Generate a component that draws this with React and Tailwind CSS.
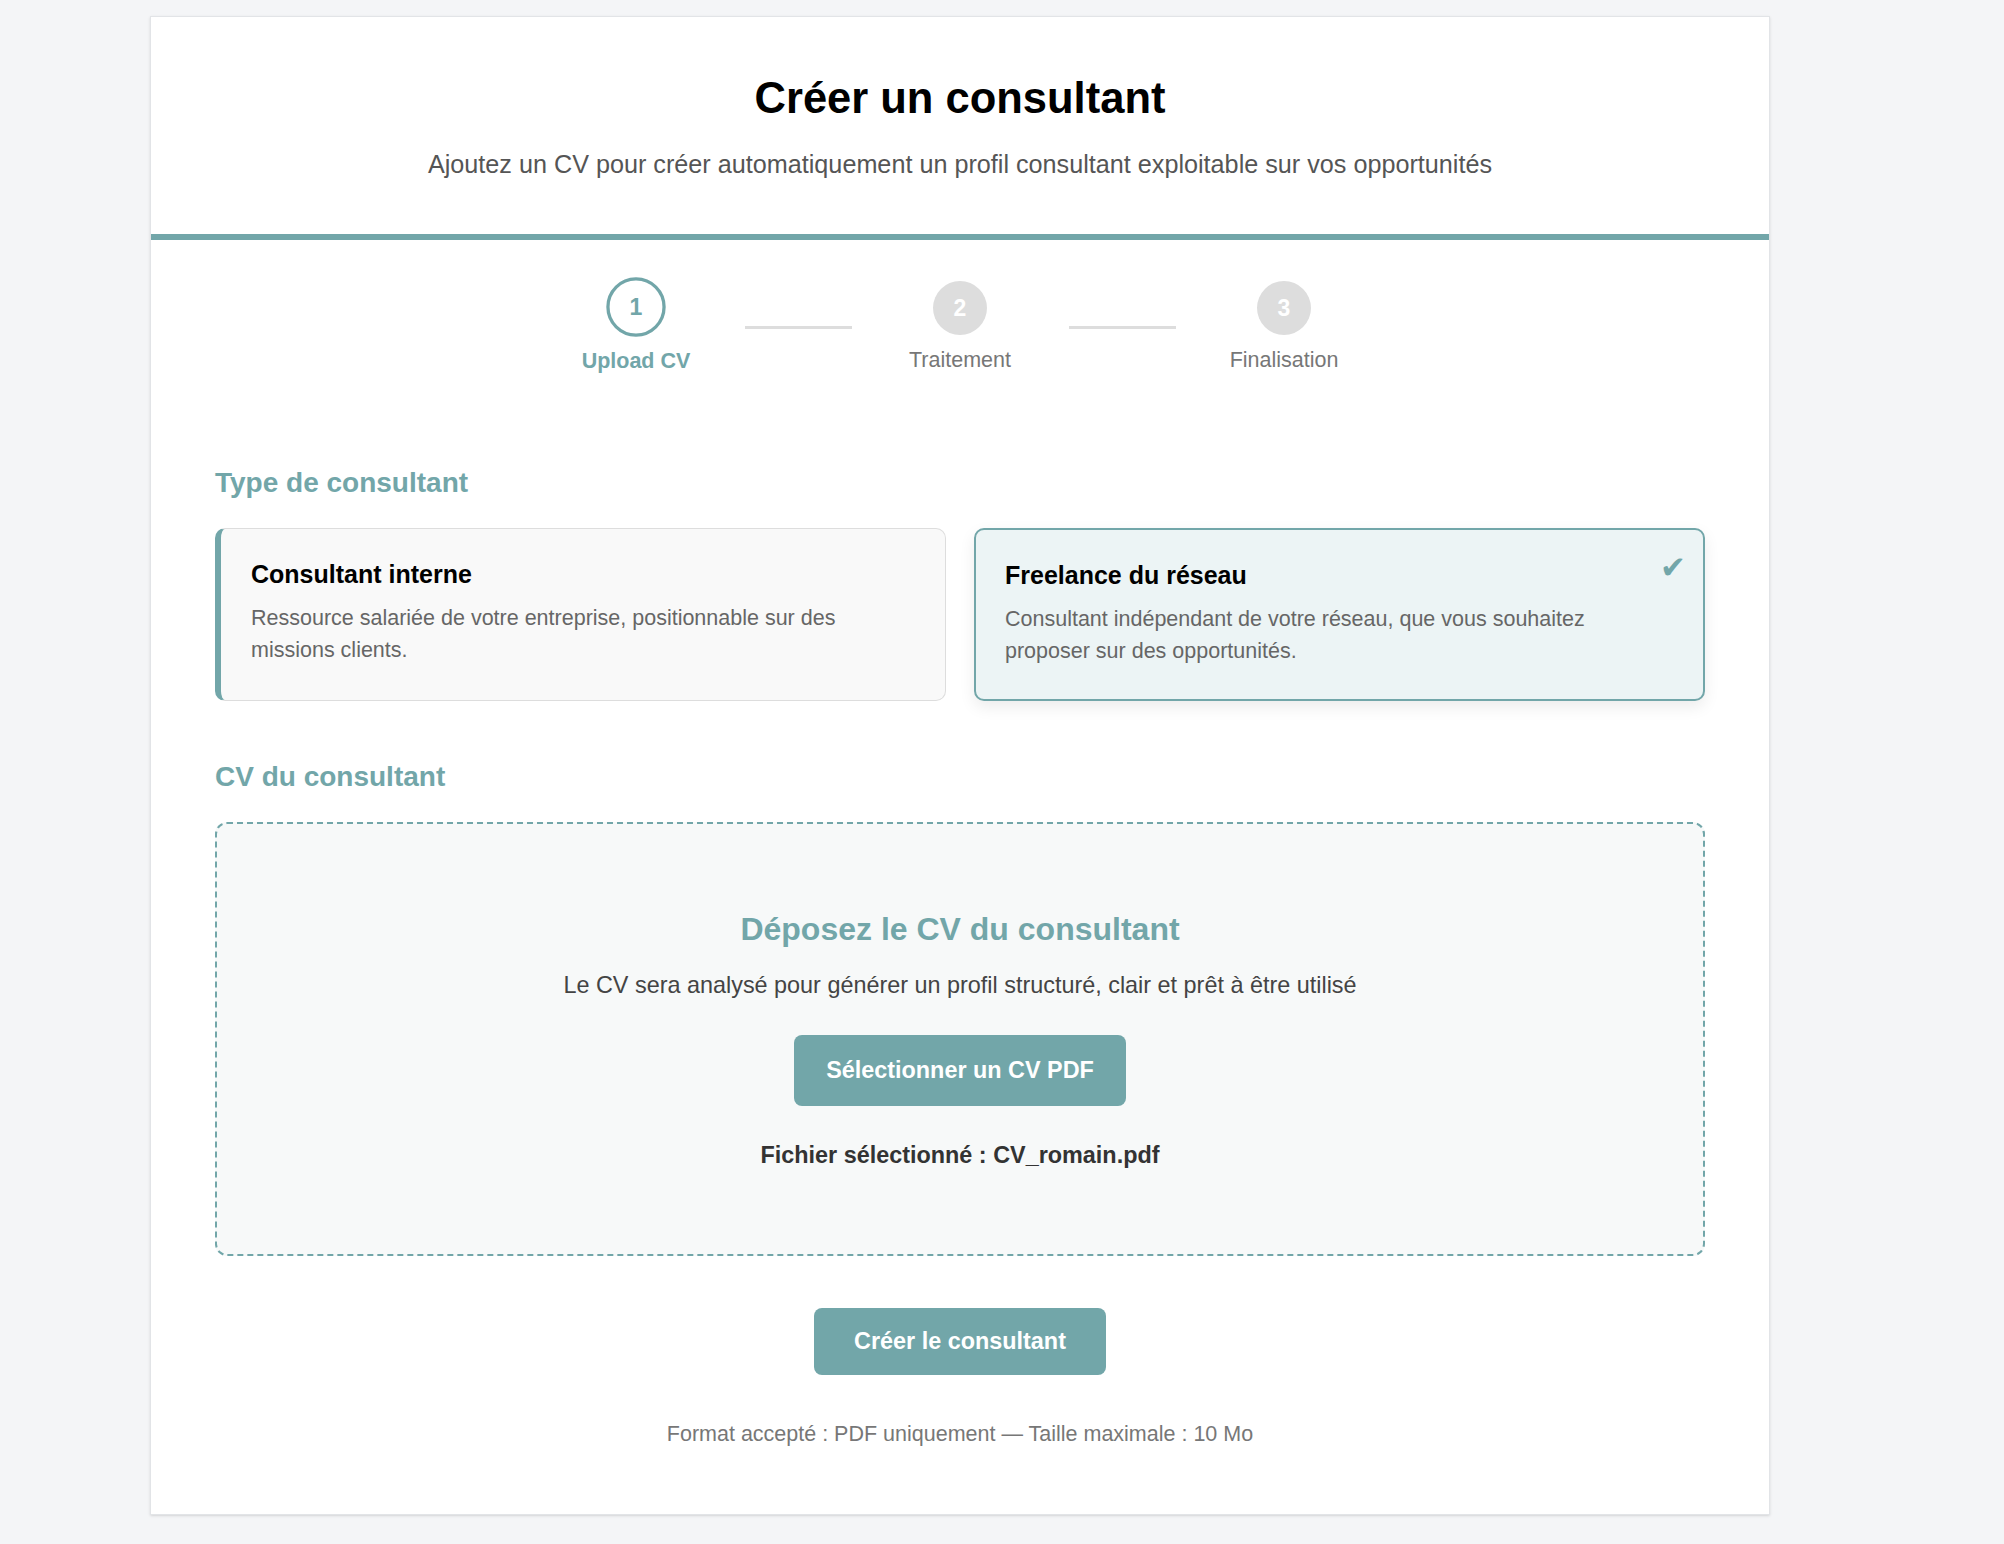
import React, { useState } from "react";

const steps = [
  { n: 1, label: "Upload CV" },
  { n: 2, label: "Traitement" },
  { n: 3, label: "Finalisation" },
];

const types = [
  {
    id: "interne",
    title: "Consultant interne",
    desc: "Ressource salariée de votre entreprise, positionnable sur des missions clients.",
  },
  {
    id: "freelance",
    title: "Freelance du réseau",
    desc: "Consultant indépendant de votre réseau, que vous souhaitez proposer sur des opportunités.",
  },
];

// Stepper shown under the header
const Stepper = ({ current }) => (
  <div className="flex flex-row items-center justify-center pt-[40px]">
    {steps.map((s, i) => (
      <React.Fragment key={s.n}>
        {i > 0 && <div className="w-[107px] h-[3px] bg-[#dddddd]" />}
        <div className="w-[217px] flex flex-col items-center">
          {s.n === current ? (
            <div className="w-[54px] h-[54px] rounded-full border-[3px] border-[#72a6a9] bg-white text-[#72a6a9] flex items-center justify-center text-[21px] font-bold scale-110">
              {s.n}
            </div>
          ) : (
            <div className="w-[54px] h-[54px] rounded-full bg-[#dddddd] text-white flex items-center justify-center text-[23px] font-bold">
              {s.n}
            </div>
          )}
          <span
            className={
              s.n === current
                ? "mt-[15px] text-[21.5px] leading-[25px] font-bold text-[#72a6a9]"
                : "mt-[13px] text-[21.5px] leading-[25px] text-[#777777]"
            }
          >
            {s.label}
          </span>
        </div>
      </React.Fragment>
    ))}
  </div>
);

export default function App() {
  const [type, setType] = useState("freelance");
  const [file] = useState("CV_romain.pdf");

  return (
    <div
      className="min-h-screen bg-[#f4f5f7] pt-[16px] pb-[30px]"
      style={{ fontFamily: '"Liberation Sans", Arial, sans-serif' }}
    >
      <div className="ml-[150px] w-[1620px] bg-white border border-[#e2e4e7] shadow-sm">
        {/* Header */}
        <div className="text-center pt-[56px] pb-[55px] border-b-[6px] border-[#72a6a9]">
          <h1 className="text-[43.5px] leading-[51px] font-bold text-black">Créer un consultant</h1>
          <p className="mt-[26px] text-[25.2px] leading-[29px] text-[#555555]">
            Ajoutez un CV pour créer automatiquement un profil consultant exploitable sur vos opportunités
          </p>
        </div>

        <Stepper current={1} />

        <div className="px-[64px] pt-[93px] pb-[67px]">
          {/* Type de consultant */}
          <h2 className="text-[28px] leading-[32px] font-bold text-[#72a6a9]">Type de consultant</h2>
          <div className="mt-[29px] grid grid-cols-2 gap-[28px]">
            {types.map((t) =>
              t.id === type ? (
                <div
                  key={t.id}
                  onClick={() => setType(t.id)}
                  className="relative rounded-[10px] border-2 border-[#72a6a9] bg-[#ecf4f5] pl-[29px] pr-[30px] pt-[31px] pb-[32px] shadow-[0_6px_16px_rgba(0,0,0,0.08)] cursor-pointer"
                >
                  <span
                    className="absolute top-[22px] right-[17px] text-[31px] leading-none text-[#72a6a9]"
                    style={{ fontFamily: '"DejaVu Sans", sans-serif' }}
                  >
                    ✔
                  </span>
                  <h3 className="text-[25px] leading-[29px] font-bold text-black">{t.title}</h3>
                  <p className="mt-[13px] text-[21.5px] leading-[32px] text-[#666666]">{t.desc}</p>
                </div>
              ) : (
                <div
                  key={t.id}
                  onClick={() => setType(t.id)}
                  className="rounded-[10px] border border-[#dddddd] border-l-[6px] border-l-[#72a6a9] bg-[#f9f9f9] pl-[30px] pr-[30px] pt-[31px] pb-[33px] cursor-pointer"
                >
                  <h3 className="text-[25px] leading-[29px] font-bold text-black">{t.title}</h3>
                  <p className="mt-[13px] text-[21.5px] leading-[32px] text-[#666666]">{t.desc}</p>
                </div>
              )
            )}
          </div>

          {/* CV upload */}
          <h2 className="mt-[60px] text-[28px] leading-[32px] font-bold text-[#72a6a9]">CV du consultant</h2>
          <div className="mt-[29px] rounded-[12px] border-2 border-dashed border-[#72a6a9] bg-[#f7f9f9] pt-[87px] pb-[86px] flex flex-col items-center text-center">
            <h3 className="text-[32px] leading-[37px] font-bold text-[#72a6a9]">Déposez le CV du consultant</h3>
            <p className="mt-[24px] text-[23.4px] leading-[26px] text-[#444444]">
              Le CV sera analysé pour générer un profil structuré, clair et prêt à être utilisé
            </p>
            <button className="mt-[37px] rounded-[8px] bg-[#72a6a9] px-[32px] py-[22px] text-[23.4px] leading-[27px] font-bold text-white">
              Sélectionner un CV PDF
            </button>
            <p className="mt-[36px] text-[23.4px] leading-[26px] font-bold text-[#333333]">
              Fichier sélectionné : {file}
            </p>
          </div>

          <div className="flex flex-col items-center">
            <button className="mt-[52px] rounded-[8px] bg-[#72a6a9] px-[40px] py-[20px] text-[23.4px] leading-[27px] font-bold text-white">
              Créer le consultant
            </button>
            <p className="mt-[47px] text-[21.5px] leading-[25px] text-[#777777]">
              Format accepté : PDF uniquement — Taille maximale : 10 Mo
            </p>
          </div>
        </div>
      </div>
    </div>
  );
}
